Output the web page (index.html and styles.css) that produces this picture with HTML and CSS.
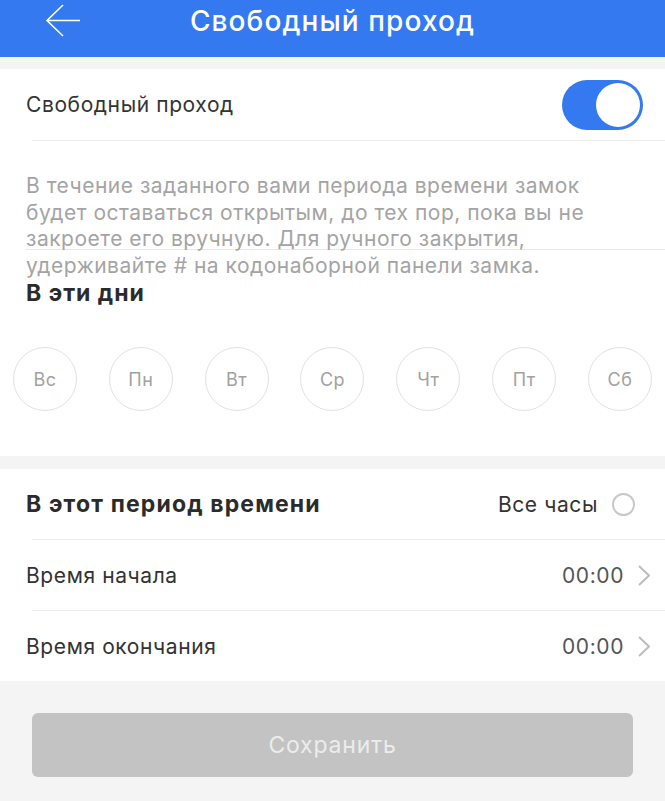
FILE: index.html
```html
<!DOCTYPE html>
<html lang="ru">

<head>
    <meta charset="UTF-8">
    <meta name="viewport" content="width=device-width, initial-scale=1.0">
    <link rel="stylesheet" href="styles.css">
    <title>Свободный проход</title>
</head>

<body>

    <div class="topo">
        <button class="voltar">
            <svg width="36" height="34" viewBox="0 0 36 34">
                <path d="M35 16.5H2M18 1L2 16.5L18 32" fill="none" stroke="#fff" stroke-width="1.6" />
            </svg>
        </button>
        <h1>Свободный проход</h1>
    </div>

    <div class="bloco">
        <div class="linha linha-primeira">
            <span>Свободный проход</span>
            <label class="chave">
                <input type="checkbox" checked>
                <span class="bolinha"></span>
            </label>
        </div>

        <div class="descricao">
            <p>В течение заданного вами периода времени замок будет оставаться открытым, до тех пор, пока вы не закроете его вручную. Для ручного закрытия, удерживайте # на кодонаборной панели замка.</p>
        </div>

        <h2 class="titulo-dias">В эти дни</h2>

        <div class="dias">
            <button>Вс</button>
            <button>Пн</button>
            <button>Вт</button>
            <button>Ср</button>
            <button>Чт</button>
            <button>Пт</button>
            <button>Сб</button>
        </div>
    </div>

    <div class="bloco bloco-horario">
        <div class="linha linha-titulo">
            <h2>В этот период времени</h2>
            <label class="todas">Все часы <span class="radio"></span></label>
        </div>
        <div class="linha">
            <span>Время начала</span>
            <span class="valor">00:00
                <svg class="seta" width="12" height="21" viewBox="0 0 12 21"><path d="M1 1L11 10.5L1 20" fill="none" stroke="#bdbdbd" stroke-width="2" /></svg>
            </span>
        </div>
        <div class="linha linha-ultima">
            <span>Время окончания</span>
            <span class="valor">00:00
                <svg class="seta" width="12" height="21" viewBox="0 0 12 21"><path d="M1 1L11 10.5L1 20" fill="none" stroke="#bdbdbd" stroke-width="2" /></svg>
            </span>
        </div>
    </div>

    <div class="rodape">
        <button class="salvar" disabled>Сохранить</button>
    </div>

</body>
</html>
```

FILE: styles.css
```css
body {
    margin: 0;
    background: #f4f4f4;
    font-family: Inter, Roboto, "Liberation Sans", sans-serif;
    color: #333;
    letter-spacing: 0.6px;
}

.topo {
    height: 57px;
    background: #3479f0;
    display: flex;
    align-items: flex-start;
    justify-content: center;
    position: relative;
}

.topo h1 {
    margin: 0;
    margin-top: 3px;
    font-size: 28px;
    font-weight: 500;
    letter-spacing: 1.1px;
    color: #fff;
    line-height: 36px;
}

.voltar {
    position: absolute;
    left: 45px;
    top: 4px;
    padding: 0;
    border: none;
    background: none;
}

.bloco {
    background: #fff;
    margin-top: 12px;
}

.linha {
    display: flex;
    align-items: center;
    justify-content: space-between;
    height: 70px;
    margin-left: 32px;
    padding-right: 22px;
    border-bottom: 1px solid #ececec;
    font-size: 21px;
}

.linha > span:first-child,
.linha h2 {
    margin-left: -6px;
}

.linha-primeira {
    height: 71px;
}

.chave {
    position: relative;
    width: 81px;
    height: 50px;
}

.chave input {
    display: none;
}

.bolinha {
    position: absolute;
    inset: 0;
    border-radius: 25px;
    background: #3479f0;
}

.bolinha::after {
    content: "";
    position: absolute;
    right: 3px;
    top: 3px;
    width: 44px;
    height: 44px;
    border-radius: 50%;
    background: #fff;
}

.descricao {
    height: 108px;
    margin-left: 26px;
    border-bottom: 1px solid #e8e8e8;
}

.descricao p {
    margin: 0;
    padding-top: 32px;
    padding-right: 50px;
    font-size: 21px;
    line-height: 26.5px;
    letter-spacing: 0.5px;
    color: #a4a4a4;
}

.titulo-dias {
    margin: 30px 0 0 26px;
    font-size: 23px;
    line-height: 26px;
    font-weight: 700;
    letter-spacing: 1px;
    color: #2b2b2b;
}

.dias {
    display: flex;
    justify-content: space-between;
    padding: 41px 13px 45px 13px;
}

.dias button {
    width: 64px;
    height: 64px;
    border-radius: 50%;
    border: 1.5px solid #e2e2e2;
    background: #fff;
    color: #a2a2a2;
    font-family: Inter, Roboto, "Liberation Sans", sans-serif;
    font-size: 18px;
    letter-spacing: 0.5px;
    padding: 0;
}

.bloco-horario {
    margin-top: 13px;
}

.linha-titulo h2 {
    margin-top: 0;
    margin-bottom: 0;
    font-size: 23px;
    font-weight: 700;
    letter-spacing: 1.15px;
    color: #2b2b2b;
}

.todas {
    display: flex;
    align-items: center;
    gap: 14px;
    font-size: 21px;
    color: #333;
    margin-right: 8px;
}

.radio {
    width: 19px;
    height: 19px;
    border: 2px solid #c8c8c8;
    border-radius: 50%;
}

.valor {
    display: flex;
    align-items: center;
    gap: 14px;
    color: #555;
    font-size: 21px;
    margin-right: -7px;
}

.linha-ultima {
    border-bottom: none;
}

.rodape {
    padding: 32px 32px 40px 32px;
}

.salvar {
    width: 100%;
    height: 64px;
    border: none;
    border-radius: 6px;
    background: #c3c3c3;
    color: #ececec;
    font-family: Inter, Roboto, "Liberation Sans", sans-serif;
    font-size: 23px;
    letter-spacing: 0.8px;
}
```
